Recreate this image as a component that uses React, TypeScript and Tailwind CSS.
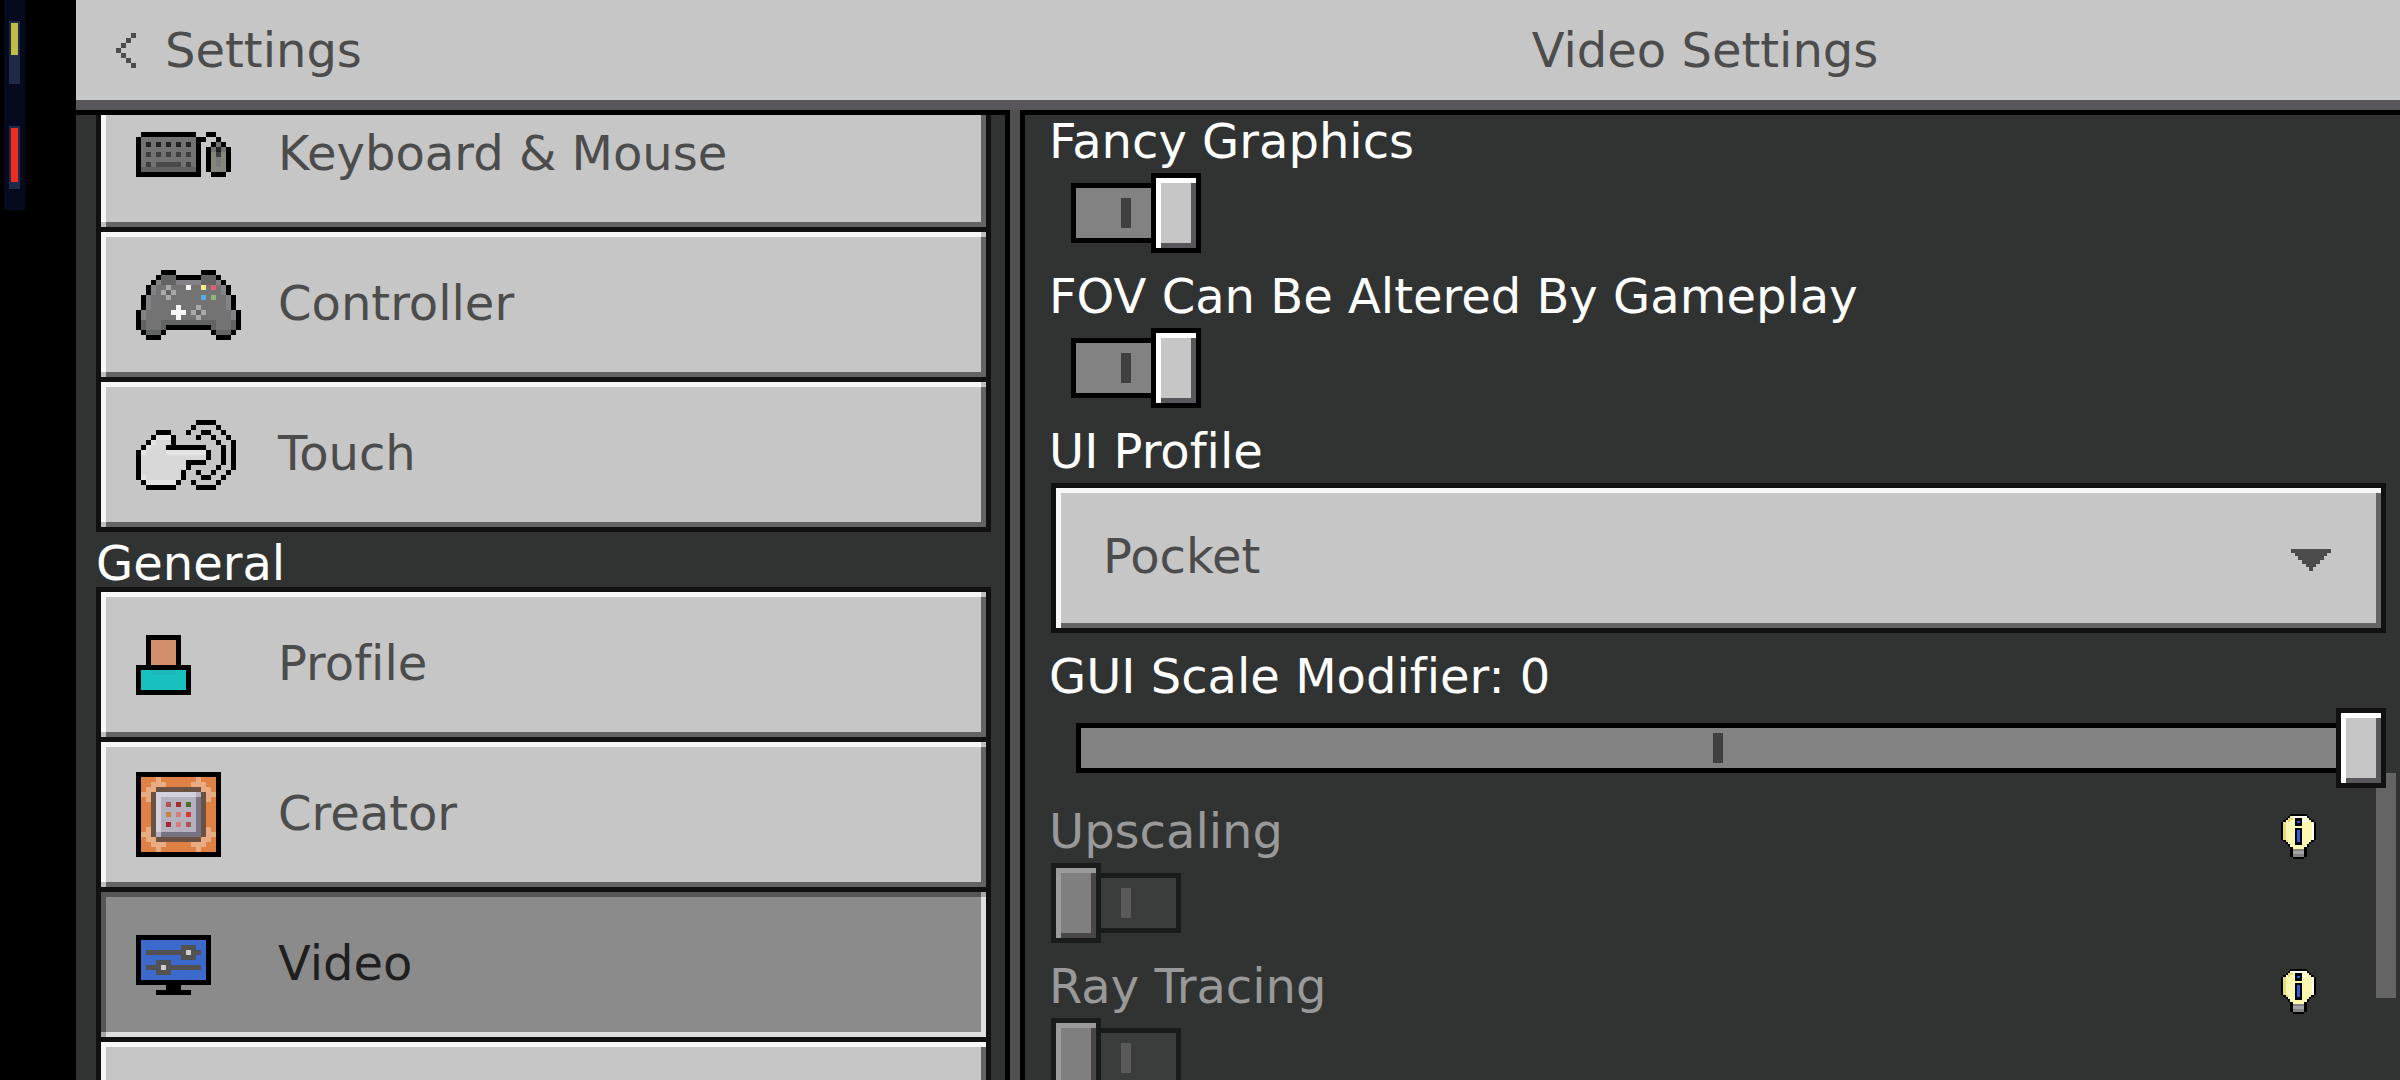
import { useId, useState } from "react"
import type { ReactNode } from "react"
import clsx from "clsx"

// One letter per pixel, "." is transparent
const SPRITES = {
  back: {
    palette: { K: "#4c4c4c" },
    rows: ["...K", "..K.", ".K..", "K...", ".K..", "..K.", "...K"],
  },
  keyboard: {
    palette: { K: "#000", g: "#727272", d: "#202121", m: "#3e3e3e", n: "#4a4a4a", b: "#626262", l: "#86867f", h: "#7a7a7a" },
    rows: [
      ".KKKKKKKKKKK..KK...",
      "KgggggggggggKK..K..",
      "KgdgdgdgdgdgK..KgK.",
      "KgggggggggggK.KgdgK",
      "KgmgmgmgmgmgK.KlmlK",
      "KgggggggggggK.KlhlK",
      "KgmgnnnnngmgK.KlhlK",
      "KbbbbbbbbbbbK.KlllK",
      "KKKKKKKKKKKKK..KKK.",
    ],
  },
  controller: {
    palette: { K: "#000", g: "#737373", b: "#626463", l: "#848286", a: "#a9a9ab", W: "#f7f7f7", y: "#f5e98c", r: "#e85b74", u: "#57abe0", e: "#8fb37c" },
    rows: [
      ".....KKK.....KKK.....",
      "....KbbbKKKKKbbbK....",
      "...KlbbblllllbbblK...",
      "..KlggagggWggygrglK..",
      "..KlgabaggggggggglK..",
      ".KlgggaggggggugegglK.",
      ".KlggggggggggggggglK.",
      ".KlgggggWgggaggggglK.",
      "KlgggggWWWgabaggggglK",
      "KlggggggWgggagggggglK",
      "KbgggbbbbbbbbbbbgggbK",
      "KbgggbKKKKKKKKKbgggbK",
      ".KbbbK.........KbbbK.",
      "..KKK...........KKK..",
    ],
  },
  touch: {
    palette: { K: "#000", W: "#e4e4e4", w: "#d8d8d8" },
    rows: [
      "............KKKK....",
      "...........K....K...",
      "....KKK...K..KK..K..",
      "...KWWWK....K..K..K.",
      "..KWwwwK........K..K",
      ".KWwwwKKKKKKKK...K.K",
      "KWwwwwWWWWWWWWK..K.K",
      "KwwwwwwwwwwwwwK..K.K",
      "KwwwwwwwwwKKKK...K.K",
      "KwwwwwwwwwK.....K..K",
      "KwwwwwwwwK..K..K..K.",
      "KWwwwwwwwK...KK..K..",
      ".KWWWWWWK..K....K...",
      "..KKKKKK....KKKK....",
    ],
  },
  profile: {
    palette: { K: "#000", s: "#d18f6b", t: "#19c1be", T: "#1ab9b7" },
    rows: [
      "..KKKKKKK..",
      "..KsssssK..",
      "..KsssssK..",
      "..KsssssK..",
      "..KsssssK..",
      "..KsssssK..",
      "KKKKKKKKKKK",
      "KttTTTTTttK",
      "KtttttttttK",
      "KtttttttttK",
      "KtttttttttK",
      "KKKKKKKKKKK",
    ],
  },
  creator: {
    palette: { K: "#000", o: "#df8144", p: "#e8ab82", B: "#6b5142", L: "#d3d0de", M: "#b5b1be", D: "#787382", r: "#a62a2c", q: "#ad5352", g: "#4c6e2b", y: "#c5863b", k: "#d57b7b", R: "#d43734" },
    rows: [
      "KKKKKKKKKKKKKKKKK",
      "KooopooooooopoooK",
      "KoopppooooopppooK",
      "KoppBBBBBBBBBppoK",
      "KppBLLLLLLLLMBppK",
      "KopBLMMMMMMMDBpoK",
      "KooBLMqMrMgMDBooK",
      "KooBLMMMMMMMDBooK",
      "KooBLMyMkMRMDBooK",
      "KooBLMMMMMMMDBooK",
      "KooBLMrMkMqMDBooK",
      "KopBLMMMMMMMDBpoK",
      "KppBMDDDDDDDDBppK",
      "KoppBBBBBBBBBppoK",
      "KoopppooooopppooK",
      "KooopooooooopoooK",
      "KKKKKKKKKKKKKKKKK",
    ],
  },
  video: {
    palette: { K: "#000", b: "#3b69cc", g: "#525252", w: "#cecece" },
    rows: [
      "KKKKKKKKKKKKKKK",
      "KbbbbbbbbbbbbbK",
      "KbbbbbbbbgggbbK",
      "KbggggggggwggbK",
      "KbbbbbbbbgggbbK",
      "KbbbgggbbbbbbbK",
      "KbgggwgggggggbK",
      "KbbbgggbbbbbbbK",
      "KbbbbbbbbbbbbbK",
      "KKKKKKKKKKKKKKK",
      "......KKK......",
      "....KKKKKKK....",
    ],
  },
}

type SpriteName = keyof typeof SPRITES

const PIXEL = 5

const Sprite = ({ name }: { name: SpriteName }) => {
  const { rows, palette } = SPRITES[name]
  const colors = palette as Record<string, string>
  const width = rows[0].length
  const height = rows.length

  return (
    <svg
      width={width * PIXEL}
      height={height * PIXEL}
      viewBox={`0 0 ${width} ${height}`}
      shapeRendering="crispEdges"
      aria-hidden="true"
    >
      {rows.flatMap((row, y) =>
        row.split("").map((key, x) =>
          key === "." ? null : <rect key={`${x}-${y}`} x={x} y={y} width={1} height={1} fill={colors[key]} />
        )
      )}
    </svg>
  )
}

const InfoBulb = () => (
  <svg width="35" height="45" viewBox="0 0 35 45" shapeRendering="crispEdges" aria-hidden="true">
    <path
      fill="#000"
      d="M9 0H26V2H28V4H30V6H33V8H35V26H33V28H30V30H28V33H26V43H23V45H12V43H9V33H7V30H5V28H2V26H0V8H2V6H5V4H7V2H9Z"
    />
    <path fill="#fcf7b0" d="M9 2H26V4H28V6H30V8H33V26H30V28H28V30H26V33H23V35H12V33H9V30H7V28H5V26H2V8H5V6H7V4H9Z" />
    <path fill="#e6dc7c" d="M2 8H5V26H7V28H5V26H2ZM7 4H12V6H9V8H7Z" />
    <path fill="#fff" d="M12 2H26V4H12ZM21 6H26V8H21ZM31 8H33V26H31Z" />
    <path fill="#848484" d="M12 35H23V43H12Z" />
    <path fill="#a3a3a3" d="M12 37H23V40H12Z" />
    <path fill="#000" d="M14 4H21V12H14ZM14 14H21V31H14Z" />
    <path fill="#2f5fe0" d="M16 7H19V9H16ZM16 16H19V28H16Z" />
  </svg>
)

const CORNERS =
  "before:absolute before:bottom-0 before:left-0 before:size-[5px] after:absolute after:top-0 after:right-0 after:size-[5px]"

interface NavItemProps {
  icon: SpriteName
  label: string
  active?: boolean
  onSelect: (label: string) => void
}

const NavItem = ({ icon, label, active, onSelect }: NavItemProps) => (
  <li className="-mb-[5px]">
    <button
      type="button"
      aria-current={active ? "page" : undefined}
      onClick={() => onSelect(label)}
      className={clsx(
        "relative flex h-[155px] w-full items-center border-5 border-[#111] px-[35px] text-left",
        CORNERS,
        active
          ? "bg-[#8b8b8b] text-[#1f1f1f] shadow-[inset_5px_5px_0_#575657,inset_-5px_-5px_0_#dfdfdf] before:bg-[#a8a8a8] after:bg-[#a8a8a8]"
          : "bg-[#c6c6c6] text-[#4c4c4c] shadow-[inset_5px_5px_0_#f7f7f7,inset_-5px_-5px_0_#646464] before:bg-[#bfbfbf] after:bg-[#bfbfbf]"
      )}
    >
      <span className="w-[142px] shrink-0">
        <Sprite name={icon} />
      </span>
      <span className="pb-1">{label}</span>
    </button>
  </li>
)

interface ToggleProps {
  label: string
  defaultChecked?: boolean
  disabled?: boolean
  info?: boolean
}

const Toggle = ({ label, defaultChecked, disabled, info }: ToggleProps) => {
  const id = useId()
  return (
    <div className="mb-[19px]">
      <div className="flex h-12 items-start justify-between pr-[70px]">
        <label htmlFor={id} className={disabled ? "text-[#999]" : "text-white"}>
          {label}
        </label>
        {info && (
          <button type="button" aria-label={`About ${label}`} className="pt-[7px]">
            <InfoBulb />
          </button>
        )}
      </div>
      <input
        id={id}
        type="checkbox"
        role="switch"
        defaultChecked={defaultChecked}
        disabled={disabled}
        className={clsx(
          "relative mt-2 ml-[2px] block h-20 w-[150px] appearance-none",
          // track with the centre notch
          "before:absolute before:inset-x-5 before:inset-y-[10px] before:border-5 before:border-black before:bg-[#828282] before:bg-[linear-gradient(#404040,#404040)] before:bg-[length:10px_30px] before:bg-center before:bg-no-repeat",
          "disabled:before:border-[#1a1c1b] disabled:before:bg-[#3b3c3c] disabled:before:bg-[linear-gradient(#5a5a5a,#5a5a5a)]",
          // knob
          "after:absolute after:inset-y-0 after:left-0 after:w-[50px] after:border-5 after:border-black after:bg-[#c6c6c6] after:shadow-[inset_5px_5px_0_#fff,inset_-5px_-5px_0_#58565a]",
          "checked:after:right-0 checked:after:left-auto",
          "disabled:after:border-[#1a1c1b] disabled:after:bg-[#7f7f7f] disabled:after:shadow-[inset_5px_5px_0_#9b9b9b,inset_-5px_-5px_0_#484647]"
        )}
      />
    </div>
  )
}

const Meter = ({ children }: { children: ReactNode }) => (
  <div className="h-[63px] w-[11px] bg-[#1f2a45] p-[2px]">{children}</div>
)

const App = () => {
  const [section, setSection] = useState("Video")
  const [scale, setScale] = useState(0)

  return (
    <div className="flex h-screen overflow-hidden bg-black font-['DejaVu_Sans',sans-serif] text-5xl [font-variant-ligatures:none]">
      {/* Edge strip */}
      <aside className="w-[76px] shrink-0 pl-1" aria-hidden="true">
        <div className="flex h-[210px] w-[21px] flex-col items-center gap-[42px] bg-[#050a1f] pt-[21px]">
          <Meter>
            <div className="h-8 bg-[#c0be45]" />
          </Meter>
          <Meter>
            <div className="h-[54px] bg-[#ef2b22]" />
          </Meter>
        </div>
      </aside>

      <div className="flex min-w-0 flex-1 flex-col bg-[#505050]">
        {/* Title bar */}
        <header className="grid h-[110px] shrink-0 grid-cols-[934fr_1390fr] items-center border-b-10 border-[#58565a] bg-[#c6c6c6] text-[#4c4c4c] shadow-[inset_0_-5px_0_#c6c8cc]">
          <button type="button" className="flex items-center gap-[29px] pl-10 text-left">
            <Sprite name="back" />
            <span>Settings</span>
          </button>
          <h1 className="text-center">Video Settings</h1>
        </header>

        <div className="grid min-h-0 flex-1 grid-cols-[934fr_1380fr] gap-[10px]">
          {/* Section list */}
          <nav className="overflow-hidden border-t-5 border-r-5 border-black bg-[#313332] pr-[14px] pl-5">
            <ul className="-mt-[38px]">
              <NavItem icon="keyboard" label="Keyboard & Mouse" active={section === "Keyboard & Mouse"} onSelect={setSection} />
              <NavItem icon="controller" label="Controller" active={section === "Controller"} onSelect={setSection} />
              <NavItem icon="touch" label="Touch" active={section === "Touch"} onSelect={setSection} />
            </ul>
            <h2 className="mt-3 text-white">General</h2>
            <ul>
              <NavItem icon="profile" label="Profile" active={section === "Profile"} onSelect={setSection} />
              <NavItem icon="creator" label="Creator" active={section === "Creator"} onSelect={setSection} />
              <NavItem icon="video" label="Video" active={section === "Video"} onSelect={setSection} />
              <li>
                <button
                  type="button"
                  aria-label="More settings"
                  className="block h-[155px] w-full border-5 border-[#111] bg-[#c6c6c6] shadow-[inset_5px_5px_0_#f7f7f7,inset_-5px_-5px_0_#646464]"
                />
              </li>
            </ul>
          </nav>

          {/* Options */}
          <main className="relative overflow-hidden border-t-5 border-l-5 border-black bg-[#313332] pt-[2px] pr-[14px] pl-6">
            <Toggle label="Fancy Graphics" defaultChecked />
            <Toggle label="FOV Can Be Altered By Gameplay" defaultChecked />

            <div className="mb-[19px]">
              <label htmlFor="ui-profile" className="block text-white">
                UI Profile
              </label>
              <div className="relative mt-2 ml-[2px]">
                <select
                  id="ui-profile"
                  defaultValue="Pocket"
                  className="block h-[150px] w-full appearance-none border-5 border-[#111] bg-[#c6c6c6] pb-1 pl-[47px] text-[#4c4c4c] shadow-[inset_5px_5px_0_#f7f7f7,inset_-5px_-5px_0_#646464]"
                >
                  <option>Pocket</option>
                  <option>Classic</option>
                </select>
                <svg
                  className="pointer-events-none absolute top-[66px] right-[55px]"
                  width="40"
                  height="22"
                  viewBox="0 0 40 22"
                  shapeRendering="crispEdges"
                  aria-hidden="true"
                >
                  <path
                    fill="#4c4c4c"
                    d="M0 0H40V4H36V7H33V11H29V15H25V18H22V22H18V18H15V15H11V11H7V7H4V4H0Z"
                  />
                </svg>
              </div>
            </div>

            <div className="mb-[19px]">
              <label htmlFor="gui-scale" className="block text-white">
                GUI Scale Modifier: {scale}
              </label>
              <div className="relative z-10 mt-2 pl-[27px]">
                <input
                  id="gui-scale"
                  type="range"
                  min={-2}
                  max={0}
                  value={scale}
                  onChange={(e) => setScale(Number(e.target.value))}
                  className={clsx(
                    "block h-20 w-full appearance-none bg-transparent",
                    "[&::-webkit-slider-runnable-track]:h-[50px] [&::-webkit-slider-runnable-track]:bg-[#828282] [&::-webkit-slider-runnable-track]:bg-[linear-gradient(#404040,#404040)] [&::-webkit-slider-runnable-track]:bg-[length:10px_30px] [&::-webkit-slider-runnable-track]:bg-[position:49%_50%] [&::-webkit-slider-runnable-track]:bg-no-repeat [&::-webkit-slider-runnable-track]:shadow-[inset_0_0_0_5px_#000]",
                    "[&::-webkit-slider-thumb]:-mt-[15px] [&::-webkit-slider-thumb]:h-20 [&::-webkit-slider-thumb]:w-[50px] [&::-webkit-slider-thumb]:appearance-none [&::-webkit-slider-thumb]:border-5 [&::-webkit-slider-thumb]:border-[#111] [&::-webkit-slider-thumb]:bg-[#c6c6c6] [&::-webkit-slider-thumb]:shadow-[inset_5px_5px_0_#fff,inset_-5px_-5px_0_#58565a]"
                  )}
                />
              </div>
            </div>

            <Toggle label="Upscaling" disabled info />
            <Toggle label="Ray Tracing" disabled info />

            {/* Scrollbar thumb */}
            <div className="absolute top-[658px] right-1 h-[225px] w-5 bg-[#646464]" />
          </main>
        </div>
      </div>
    </div>
  )
}

export default App
